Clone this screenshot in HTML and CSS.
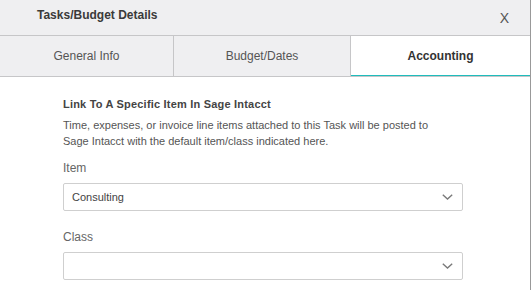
FILE: index.html
```html
<!DOCTYPE html>
<html lang="en">
<head>
    <meta charset="UTF-8">
    <title>Tasks/Budget Details</title>
    <link rel="stylesheet" href="styles.css">
</head>
<body>
    <div class="modal">
        <div class="modal-header">
            <span class="modal-title">Tasks/Budget Details</span>
            <span class="close">X</span>
        </div>

        <div class="tabs">
            <div class="tab">General Info</div>
            <div class="tab">Budget/Dates</div>
            <div class="tab active">Accounting</div>
        </div>

        <div class="content">
            <div class="section-title">Link To A Specific Item In Sage Intacct</div>
            <p class="help">Time, expenses, or invoice line items attached to this Task will be posted to Sage Intacct with the default item/class indicated here.</p>

            <label class="field-label">Item</label>
            <div class="dropdown">
                <span>Consulting</span>
                <svg width="11" height="6" viewBox="0 0 11 6"><path d="M0.8 0.8 L5.5 5 L10.2 0.8" fill="none" stroke="#7a7a7a" stroke-width="1.4"/></svg>
            </div>

            <label class="field-label">Class</label>
            <div class="dropdown">
                <span></span>
                <svg width="11" height="6" viewBox="0 0 11 6"><path d="M0.8 0.8 L5.5 5 L10.2 0.8" fill="none" stroke="#7a7a7a" stroke-width="1.4"/></svg>
            </div>
        </div>
    </div>
</body>
</html>
```

FILE: styles.css
```css
body {
    margin: 0;
    font-family: "Liberation Sans", Arial, sans-serif;
    background: #fff;
}
.modal {
    width: 530px;
    height: 290px;
    border-right: 1px solid #999;
    background: #fff;
}
.modal-header {
    display: flex;
    justify-content: space-between;
    height: 36px;
    box-sizing: border-box;
    padding: 8px 21px 0 37px;
    background: #efeff1;
    border-bottom: 1px solid #c6c6c8;
}
.modal-title {
    font-size: 12px;
    line-height: 14px;
    font-weight: bold;
    color: #3a3a3a;
}
.close {
    font-size: 14px;
    line-height: 20px;
    color: #555;
}
.tabs {
    display: grid;
    grid-template-columns: 173px 177px 180px;
    height: 41px;
    box-sizing: border-box;
    border-bottom: 1px solid #c6c6c8;
    background: #efeff1;
}
.tab {
    display: flex;
    align-items: center;
    justify-content: center;
    font-size: 12px;
    color: #555;
}
.tab + .tab {
    border-left: 1px solid #c6c6c8;
}
.tab.active {
    background: #fff;
    color: #333;
    font-weight: bold;
    box-shadow: inset 0 -1px 0 #1fbcbc;
}
.content {
    padding: 19px 0 0 63px;
    width: 400px;
}
.section-title {
    font-size: 11px;
    line-height: 16px;
    font-weight: bold;
    color: #444;
    letter-spacing: 0.2px;
}
.help {
    width: 385px;
    margin: 5px 0 0;
    font-size: 11px;
    line-height: 16px;
    color: #555;
}
.field-label {
    display: block;
    margin-top: 11px;
    font-size: 12px;
    line-height: 16px;
    color: #666;
}
.dropdown + .field-label {
    margin-top: 18px;
}
.dropdown {
    display: flex;
    align-items: center;
    justify-content: space-between;
    height: 28px;
    box-sizing: border-box;
    margin-top: 7px;
    padding: 0 9px 0 8px;
    border: 1px solid #cfcfcf;
    border-radius: 2px;
    font-size: 11px;
    color: #444;
}
```
